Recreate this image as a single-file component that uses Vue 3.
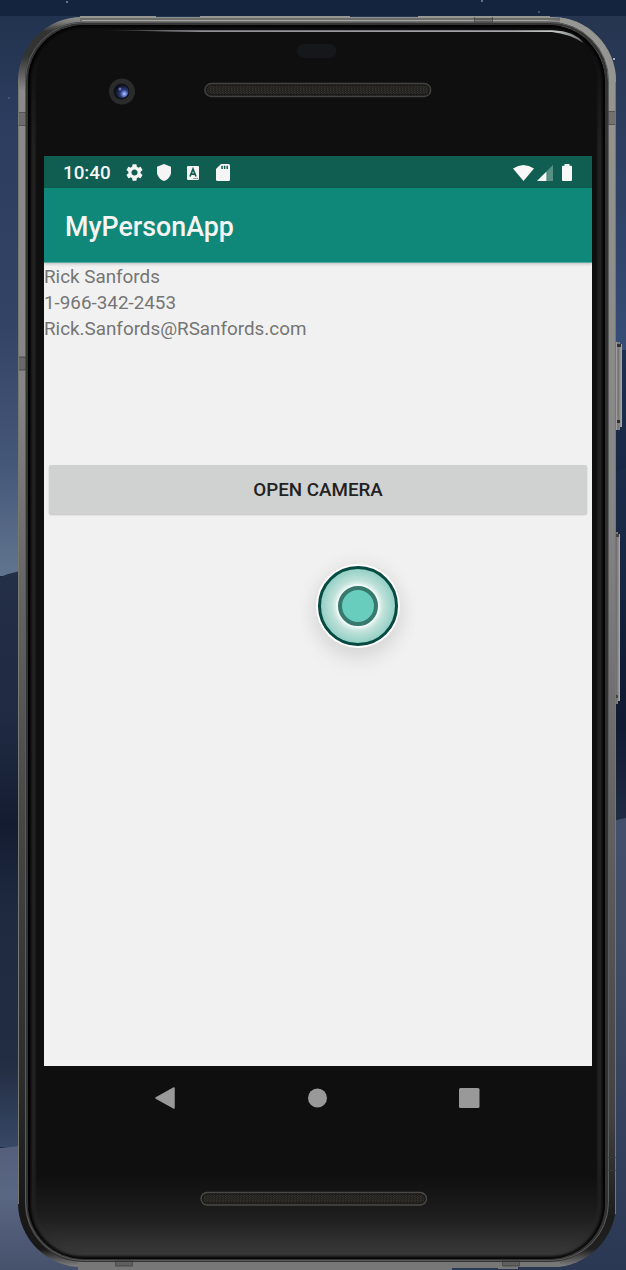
<script setup>
const contact = ['Rick Sanfords', '1-966-342-2453', 'Rick.Sanfords@RSanfords.com']
const stars = [[66, 1, 0.5], [481, 0, 0.5], [538, 11, 0.3], [8, 97, 0.2], [613, 58, 0.9]]
</script>

<template>
  <main class="desktop">
    <svg class="device" width="626" height="1270" viewBox="0 0 626 1270" aria-hidden="true">
      <defs>
        <linearGradient id="skyL" x1="0" y1="0" x2="0" y2="1">
          <stop offset="0" stop-color="#22334f" /><stop offset=".2" stop-color="#2c3d5f" />
          <stop offset=".55" stop-color="#334365" /><stop offset=".8" stop-color="#455778" /><stop offset="1" stop-color="#61748f" />
        </linearGradient>
        <linearGradient id="hillL" x1="0" y1="0" x2="0" y2="1">
          <stop offset="0" stop-color="#232f47" /><stop offset=".25" stop-color="#202b43" />
          <stop offset=".44" stop-color="#141c31" /><stop offset=".6" stop-color="#1f2a41" />
          <stop offset=".85" stop-color="#222c42" /><stop offset="1" stop-color="#374865" />
        </linearGradient>
        <linearGradient id="sandL" x1="0" y1="0" x2="0" y2="1">
          <stop offset="0" stop-color="#535f7b" /><stop offset=".4" stop-color="#5a6782" /><stop offset="1" stop-color="#46516c" />
        </linearGradient>
        <linearGradient id="skyR" x1="0" y1="0" x2="0" y2="1">
          <stop offset="0" stop-color="#26354f" /><stop offset=".4" stop-color="#2d3e60" /><stop offset="1" stop-color="#364d76" />
        </linearGradient>
        <linearGradient id="hillR" x1="0" y1="0" x2="0" y2="1">
          <stop offset="0" stop-color="#1d2f50" /><stop offset=".45" stop-color="#15213c" />
          <stop offset=".8" stop-color="#101a31" /><stop offset="1" stop-color="#1f2b43" />
        </linearGradient>
        <linearGradient id="sandR" x1="0" y1="0" x2="0" y2="1">
          <stop offset="0" stop-color="#434f6b" /><stop offset=".3" stop-color="#404b65" /><stop offset="1" stop-color="#2b3854" />
        </linearGradient>
        <linearGradient id="metal" gradientUnits="userSpaceOnUse" x1="0" y1="16" x2="0" y2="1268">
          <stop offset="0" stop-color="#969692" /><stop offset=".005" stop-color="#7a7a78" />
          <stop offset=".012" stop-color="#333" /><stop offset=".032" stop-color="#333" /><stop offset=".06" stop-color="#8a8a8a" />
          <stop offset=".3" stop-color="#858585" /><stop offset=".45" stop-color="#666" />
          <stop offset=".65" stop-color="#454545" /><stop offset=".85" stop-color="#2c2c2c" />
          <stop offset=".95" stop-color="#181818" /><stop offset=".985" stop-color="#181818" /><stop offset="1" stop-color="#8a8a8a" />
        </linearGradient>
        <linearGradient id="metalR" gradientUnits="userSpaceOnUse" x1="0" y1="16" x2="0" y2="1268">
          <stop offset="0" stop-color="#969692" /><stop offset=".4" stop-color="#858585" />
          <stop offset=".65" stop-color="#606060" /><stop offset=".88" stop-color="#414141" />
          <stop offset=".96" stop-color="#1c1c1c" /><stop offset=".985" stop-color="#202020" /><stop offset="1" stop-color="#888" />
        </linearGradient>
        <linearGradient id="face" gradientUnits="userSpaceOnUse" x1="0" y1="1175" x2="0" y2="1260">
          <stop offset="0" stop-color="#0f0f0f" /><stop offset=".5" stop-color="#1e1e1e" /><stop offset=".93" stop-color="#3a3a3a" /><stop offset="1" stop-color="#292929" />
        </linearGradient>
        <linearGradient id="shine" x1="0" y1="0" x2="1" y2="0">
          <stop offset="0" stop-color="#8c8c91" stop-opacity="0" /><stop offset=".15" stop-color="#8c8c91" />
          <stop offset=".86" stop-color="#a6a7aa" /><stop offset=".94" stop-color="#c6cac8" /><stop offset="1" stop-color="#646868" />
        </linearGradient>
        <linearGradient id="key" x1="0" y1="0" x2="1" y2="0">
          <stop offset="0" stop-color="#b0b0b0" /><stop offset=".3" stop-color="#707070" /><stop offset=".65" stop-color="#8b8b8b" /><stop offset="1" stop-color="#b0aeac" />
        </linearGradient>
        <radialGradient id="lens" cx=".68" cy=".68" r=".7">
          <stop offset="0" stop-color="#b9caff" /><stop offset=".2" stop-color="#6f86dc" />
          <stop offset=".48" stop-color="#293570" /><stop offset="1" stop-color="#10121d" />
        </radialGradient>
        <linearGradient id="fade" gradientUnits="userSpaceOnUse" x1="0" y1="50" x2="0" y2="1240">
          <stop offset="0" stop-color="#000" /><stop offset=".08" stop-color="#fff" /><stop offset=".93" stop-color="#fff" /><stop offset="1" stop-color="#333" />
        </linearGradient>
        <mask id="sides" maskUnits="userSpaceOnUse" x="0" y="0" width="626" height="1270"><rect width="626" height="1270" fill="url(#fade)" /></mask>
        <filter id="soft" filterUnits="userSpaceOnUse" x="0" y="0" width="626" height="1270"><feGaussianBlur stdDeviation="1.5" /></filter>
        <pattern id="mesh" width="3" height="2" patternUnits="userSpaceOnUse">
          <rect width="3" height="2" fill="#24221f" /><rect width="1" height="1" fill="#373530" /><rect x="1" y="1" width="1" height="1" fill="#302e2a" />
        </pattern>
        <clipPath id="faceClip"><rect x="28" y="25" width="577" height="1234" rx="56" /></clipPath>
        <clipPath id="rightHalf"><rect x="560" y="0" width="66" height="1270" /></clipPath>
      </defs>

      <!-- wallpaper -->
      <rect width="626" height="1270" fill="#14243e" />
      <rect y="16" width="300" height="560" fill="url(#skyL)" />
      <path d="M0 577Q10 573 20 571H300V1147H0Z" fill="url(#hillL)" />
      <path d="M0 1148L20 1146H300V1270H0Z" fill="url(#sandL)" />
      <rect x="300" y="16" width="326" height="334" fill="url(#skyR)" />
      <path d="M300 350H626V819H300Z" fill="url(#hillR)" />
      <path d="M300 820H616L626 818V1270H300Z" fill="url(#sandR)" />
      <path d="M616 473L626 467V600H616Z" fill="#223452" opacity=".3" />
      <rect v-for="(s, i) in stars" :key="i" :x="s[0]" :y="s[1]" width="2" height="2" fill="#a9bfe0" :opacity="s[2]" />

      <!-- side keys -->
      <path d="M616 342h4v2h2v83h-2v3h-4z" fill="url(#key)" />
      <path d="M617 344h4v3h-4zM617 420h3v3h-3z" fill="#303030" />
      <path d="M615 532h3v2h2v167h-2v3h-3z" fill="url(#key)" />
      <path d="M615 534h4v3h-4zM615 695h3v3h-3z" fill="#424242" />

      <!-- metal frame -->
      <rect x="18" y="17" width="598" height="1250" rx="64" fill="url(#metal)" />
      <rect x="18" y="17" width="598" height="1250" rx="64" fill="url(#metalR)" clip-path="url(#rightHalf)" />
      <path d="M80 18H560V25H80Z" fill="#6d6d6b" />
      <path d="M80 16H156V18H80ZM200 16H350V18H200ZM418 16H550V18H418Z" fill="#969692" />
      <path d="M78 1262H560V1267H518V1269H498V1268H452V1270H78Z" fill="#777" />
      <rect x="26.500" y="23.500" width="580" height="1237" rx="57" fill="none" stroke="#333" stroke-width="3" />
      <path d="M82 20.500H548" stroke="#a5a5a2" />
      <path d="M548 20.500A62 62 0 0 1 611 82" fill="none" stroke="#989896" />
      <path d="M18.500 80V1204M615.500 82V1214" stroke="#777770" />
      <rect x="25.500" y="22.500" width="583" height="1238" rx="58" fill="none" stroke="#5b5b5b" />

      <!-- glass -->
      <rect x="28" y="25" width="577" height="1234" rx="56" fill="url(#face)" />
      <g clip-path="url(#faceClip)" fill="none">
        <rect x="28" y="25" width="577" height="1234" rx="56" stroke="#050505" stroke-width="4.500" filter="url(#soft)" />
        <g mask="url(#sides)">
          <rect x="33.500" y="31" width="566" height="1221" rx="50" stroke="#2b2b2b" stroke-width="3" filter="url(#soft)" />
        </g>
      </g>
      <path d="M98 30.200H552Q575 31 583.500 43Q570 34 552 32H202Z" fill="url(#shine)" />
      <path d="M474.500 17V24H492.500V17M19 112.500H27M19 125.500H27M607 111.500H615M607 124.500H615M19 357H28M19 370H28M607 1157.500H616M607 1170.500H616M115.500 1259V1266H132.500V1259M502.500 1259V1266H519.500V1259" fill="none" stroke="#3c3c3c" opacity=".7" />
      <path d="M19 113H27V125H19ZM607 112H615V124H607ZM19 357H28V370H19ZM475 18H492V24H475ZM116 1260H132V1266H116ZM503 1260H519V1266H503Z" fill="#333" opacity=".35" />

      <circle cx="122" cy="91.500" r="13" fill="#2b2b2b" />
      <circle cx="121.500" cy="91.500" r="8" fill="#10121a" />
      <circle cx="122" cy="91.500" r="6.500" fill="url(#lens)" />
      <circle cx="120" cy="89" r="1.500" fill="#6374c0" />
      <rect x="297" y="44" width="39.500" height="14" rx="7" fill="#15171b" />
      <g fill="url(#mesh)" stroke-width="1.300">
        <rect x="204.800" y="83.500" width="226" height="13" rx="6.500" stroke="#424241" />
        <rect x="206.500" y="85.200" width="222.500" height="9.500" rx="4.700" stroke="#1b1b1a" />
        <rect x="201" y="1192.500" width="225.500" height="12.500" rx="6.200" stroke="#4a4947" />
        <rect x="202.700" y="1194.200" width="222" height="9" rx="4.500" stroke="#1b1b1a" />
      </g>
    </svg>

    <section class="screen">
      <header class="status">
        <span class="clock">10:40</span>
        <svg class="gear" width="18" height="18" viewBox="2 2 20 20" fill="#f5f5f5"><path d="M19.140 12.940c.04-.3.060-.61.060-.94 0-.32-.02-.64-.07-.94l2.030-1.580c.18-.14.23-.41.120-.61l-1.920-3.320c-.12-.22-.37-.29-.59-.22l-2.390.96c-.5-.38-1.030-.7-1.620-.94l-.36-2.540c-.04-.24-.24-.41-.48-.41h-3.840c-.24 0-.43.17-.47.41l-.36 2.540c-.59.24-1.130.57-1.620.94l-2.390-.96c-.22-.08-.47 0-.59.22L2.740 8.870c-.12.21-.08.47.120.61l2.030 1.580c-.05.3-.09.63-.09.94s.02.64.070.94l-2.030 1.580c-.18.14-.23.41-.12.61l1.920 3.320c.12.22.37.29.59.22l2.390-.96c.5.38 1.030.7 1.620.94l.36 2.540c.05.24.24.41.48.41h3.840c.24 0 .44-.17.47-.41l.36-2.540c.59-.24 1.130-.56 1.620-.94l2.390.96c.22.08.47 0 .59-.22l1.920-3.320c.12-.22.070-.47-.12-.61l-2.010-1.580zM12 15.600c-1.980 0-3.600-1.620-3.600-3.600s1.620-3.600 3.600-3.600 3.600 1.620 3.600 3.600-1.620 3.600-3.600 3.600z" /></svg>
        <svg class="shield" width="14" height="17" viewBox="0 0 14 17" fill="#f5f5f5"><path d="M7 0L14 2.800V8C14 12.200 11 15.700 7 17C3 15.700 0 12.200 0 8V2.800Z" /></svg>
        <svg class="keyboard" width="12" height="14" viewBox="0 0 12 14"><rect width="12" height="14" rx="1" fill="#f5f5f5" /><path d="M3 10.500L6 3L9 10.500M4.100 8.200H7.900" fill="none" stroke="#105e52" stroke-width="1.700" /><path d="M6.500 12.500H11" stroke="#105e52" stroke-width=".8" stroke-dasharray="1.200 .6" /></svg>
        <svg class="card" width="14" height="17" viewBox="0 0 14 17"><path d="M5 0H12.500Q14 0 14 1.500V15.500Q14 17 12.500 17H1.500Q0 17 0 15.500V5Z" fill="#f5f5f5" /><path d="M6 1.800V5M8.600 1.800V5M11.200 1.800V5" stroke="#105e52" stroke-width="1.500" /></svg>
        <svg class="wifi" width="21" height="16" viewBox="0 0 21 16" fill="#f8f8f8"><path d="M0 3.600Q10.500-3.600 21 3.600L10.500 16Z" /></svg>
        <svg class="cell" width="16" height="16" viewBox="0 0 16 16"><path d="M0 16L16 0V16Z" fill="#589086" /><path d="M0 16L9.300 6.700V16Z" fill="#f8f8f8" /></svg>
        <svg class="battery" width="10" height="17" viewBox="0 0 10 17" fill="#f8f8f8"><path d="M2.500 0H7.500V1.700H9Q10 1.700 10 2.700V16Q10 17 9 17H1Q0 17 0 16V2.700Q0 1.700 1 1.700H2.500Z" /></svg>
      </header>
      <h1 class="appbar">MyPersonApp</h1>
      <div class="content">
        <p v-for="line in contact" :key="line">{{ line }}</p>
        <button class="camera" type="button">OPEN CAMERA</button>
      </div>
      <div class="touch"><i></i></div>
    </section>
    <nav class="nav">
      <svg width="20" height="22" viewBox="0 0 20 22"><path d="M1 11L19 1V21Z" fill="#999" stroke="#999" stroke-width="1.500" stroke-linejoin="round" /></svg>
      <svg width="20" height="20" viewBox="0 0 20 20"><circle cx="10.500" cy="10" r="9.500" fill="#999" /></svg>
      <svg width="21" height="20" viewBox="0 0 21 20"><rect width="20.500" height="20" rx="1.500" fill="#999" /></svg>
    </nav>
  </main>
</template>

<style>
body { margin: 0; overflow: hidden; }
</style>

<style scoped>
.desktop { position: relative; box-sizing: border-box; width: 626px; height: 1270px; padding: 156px 34px 0 44px; overflow: hidden; font-family: Roboto, "Liberation Sans", sans-serif; }
.device { position: absolute; left: 0; top: 0; }
.screen { position: relative; width: 548px; height: 910px; background: #f1f1f1; overflow: hidden; }
.status { box-sizing: border-box; display: flex; align-items: center; height: 32px; padding: 1px 20px 0 19px; background: #105e52; color: #f5f5f5; }
.clock { width: 63px; font-size: 18.800px; font-weight: 500; line-height: 32px; padding-top: 1px; }
.gear { width: 17px; height: 17px; }
.shield { margin-left: 14px; }
.keyboard { margin-left: 16px; }
.card { margin-left: 17px; }
.wifi { margin-left: auto; }
.cell { margin-left: 2.500px; }
.battery { margin-left: 9.500px; }
.appbar { position: relative; box-sizing: border-box; height: 75px; margin: 0; padding: 2px 0 0 21px; background: #0f887a; border-bottom: 1px solid #5aaba1; box-shadow: 0 1px 3px rgba(0,0,0,.22); color: #f5f5f5; font-size: 26.800px; font-weight: 500; line-height: 74px; }
.content { display: flex; flex-direction: column; padding-top: 1px; color: #757575; font-size: 18.830px; line-height: 26px; }
.content p { margin: 0; }
.camera { height: 49px; margin: 123px 5px 0; padding: 0; border: 0; border-radius: 2px; background: #d0d2d1; box-shadow: 0 1px 2px rgba(0,0,0,.2); color: #222; font: 500 18.800px Roboto, sans-serif; }
.touch { position: absolute; left: 274px; top: 410px; box-sizing: border-box; display: grid; place-items: center; width: 80px; height: 80px; border: 3px solid #064a42; border-radius: 50%; background: radial-gradient(circle, #eef7f5 20px, #bfe1da 26px, #94d0c5 37px); box-shadow: 0 0 0 2px #fff, 0 3px 18px 6px rgba(0,0,0,.07), 0 14px 26px rgba(0,0,0,.06); }
.touch i { box-sizing: border-box; width: 40px; height: 40px; border: 4px solid #37796d; border-radius: 50%; background: #68cdbd; box-shadow: 0 0 0 2px #eef8f5; }
.nav { position: relative; display: flex; align-items: center; justify-content: space-between; height: 64px; padding: 0 112px 0 111px; }
</style>
